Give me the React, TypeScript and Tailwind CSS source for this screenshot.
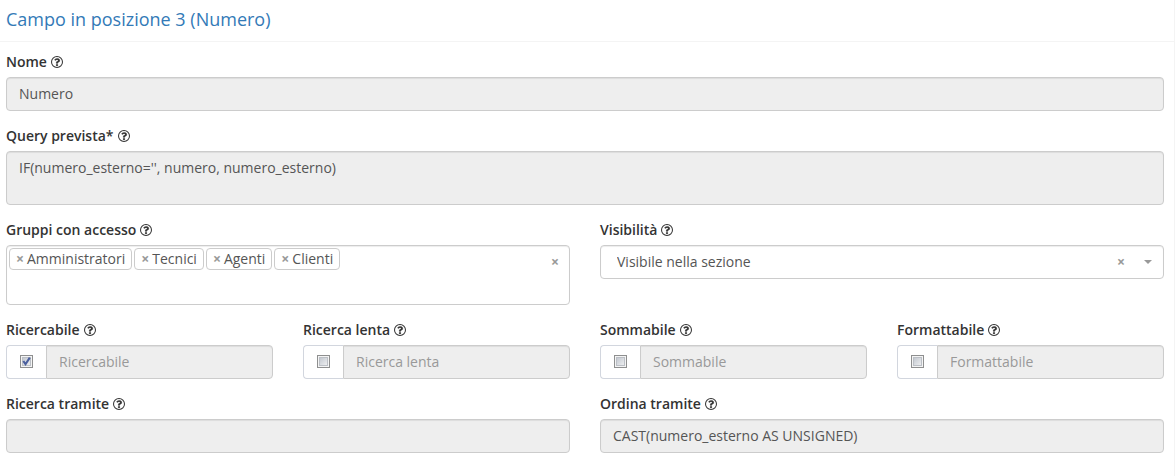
import { useState, type ReactNode } from "react";

const fieldClass =
  "block h-[34px] w-full min-w-0 border border-[#ccc] bg-[#eee] px-3 pb-0.5 text-sm text-[#555] shadow-[inset_0_1px_1px_rgba(0,0,0,0.075)] outline-none placeholder:text-[#999] placeholder:opacity-100";

function HelpIcon() {
  return (
    <svg viewBox="0 128 1536 1536" className="size-3 shrink-0" fill="currentColor" stroke="currentColor" aria-hidden="true">
      <circle cx="768" cy="896" r="702" fill="none" strokeWidth="132" />
      <path
        strokeWidth="20"
        d="M880 1200v160q0 14-9 23t-23 9h-160q-14 0-23-9t-9-23v-160q0-14 9-23t23-9h160q14 0 23 9t9 23zM1136 704q0 50-15 90t-45.5 69-52 44-59.5 36q-32 18-46.5 28t-26 24-11.5 29v32q0 14-9 23t-23 9h-160q-14 0-23-9t-9-23v-68q0-35 10.5-64.5t24-47.5 39-35.5 41-25.5 44.5-21q53-25 75-43t22-49q0-42-43.5-71.5t-95.5-29.5q-56 0-95 27-29 20-80 83-9 12-25 12-11 0-19-6l-108-82q-10-7-12-20t5-23q122-192 349-192 129 0 238.5 89.5t109.5 214.5z"
      />
    </svg>
  );
}

function Field({ id, label, children }: { id: string; label: string; children: ReactNode }) {
  return (
    <div className="min-w-0">
      <label htmlFor={id} className="mb-[5px] flex items-center gap-1 text-sm leading-5 font-semibold text-[#333]">
        {label}
        <HelpIcon />
      </label>
      {children}
    </div>
  );
}

function RemoveButton({ label, onClick }: { label: string; onClick: () => void }) {
  return (
    <button
      type="button"
      aria-label={label}
      onClick={onClick}
      className="pointer-events-auto w-2 shrink-0 text-center text-sm leading-5 font-bold text-[#999]"
    >
      ×
    </button>
  );
}

function CheckField({ id, label, initial = false }: { id: string; label: string; initial?: boolean }) {
  const [checked, setChecked] = useState(initial);
  return (
    <Field id={id} label={label}>
      <div className="flex">
        <span className="flex w-10 shrink-0 justify-center rounded-l border border-r-0 border-[#d2d6de] bg-white pt-[9px]">
          <span className="relative size-[13px]">
            <input
              id={id}
              type="checkbox"
              checked={checked}
              onChange={(e) => setChecked(e.target.checked)}
              className="block size-[13px] appearance-none border border-[#8e8f8f] bg-linear-to-br from-[#b9bfc8] to-[#f8f8f8] shadow-[inset_0_0_0_1px_#f4f4f4,inset_0_0_0_2px_#bcc0c6]"
            />
            {checked && (
              <svg viewBox="0 0 13 13" className="pointer-events-none absolute inset-0 size-[13px]" fill="none" aria-hidden="true">
                <path d="M3.3 6L5.5 9.2L9.8 2.6" stroke="#4a5f9e" strokeWidth="2.1" />
              </svg>
            )}
          </span>
        </span>
        <input type="text" disabled placeholder={label} aria-label={label} className={`${fieldClass} rounded-r`} />
      </div>
    </Field>
  );
}

export default function App() {
  const [groups, setGroups] = useState(["Amministratori", "Tecnici", "Agenti", "Clienti"]);
  const [visibility, setVisibility] = useState("section");

  return (
    <main className="min-h-screen border-r border-[#f4f4f4] bg-white font-['Open_Sans',sans-serif]">
      <header className="border-b border-[#f4f4f4] px-1.5 pt-[9px] pb-[11px]">
        <h1 className="text-lg leading-[21px] text-[#337ab7]">Campo in posizione 3 (Numero)</h1>
      </header>

      <form className="flex flex-col gap-[15px] py-2.5 pr-2.5 pl-1.5">
        <Field id="nome" label="Nome">
          <input id="nome" type="text" readOnly value="Numero" className={`${fieldClass} rounded`} />
        </Field>

        <Field id="query" label="Query prevista*">
          <textarea
            id="query"
            readOnly
            value="IF(numero_esterno='', numero, numero_esterno)"
            className="block h-[54px] w-full resize-none rounded border border-[#ccc] bg-[#eee] px-3 py-1.5 text-sm leading-5 text-[#555] shadow-[inset_0_1px_1px_rgba(0,0,0,0.075)] outline-none"
          />
        </Field>

        <div className="grid grid-cols-2 gap-[30px]">
          <Field id="gruppi" label="Gruppi con accesso">
            <div className="flex h-[60px] items-start rounded border border-[#ccc] bg-white p-0.5 shadow-[inset_0_1px_1px_rgba(0,0,0,0.075)]">
              <ul className="flex shrink-0 gap-0.5">
                {groups.map((group) => (
                  <li
                    key={group}
                    className="flex h-[22px] items-center gap-[3px] rounded border border-[#ccc] bg-white px-1.5 text-sm text-[#555]"
                  >
                    <RemoveButton label={`Rimuovi ${group}`} onClick={() => setGroups(groups.filter((g) => g !== group))} />
                    {group}
                  </li>
                ))}
              </ul>
              <input id="gruppi" type="text" className="h-[22px] min-w-0 flex-1 bg-transparent px-1 text-sm text-[#555] outline-none" />
              <div className="mt-1 mr-2 flex">
                <RemoveButton label="Rimuovi tutti" onClick={() => setGroups([])} />
              </div>
            </div>
          </Field>

          <Field id="visibilita" label="Visibilità">
            <div className="relative">
              <select
                id="visibilita"
                value={visibility}
                onChange={(e) => setVisibility(e.target.value)}
                className="block h-[34px] w-full appearance-none rounded border border-[#ccc] bg-white pr-14 pl-4 text-sm text-[#555] shadow-[inset_0_1px_1px_rgba(0,0,0,0.075)] outline-none"
              >
                <option value=""></option>
                <option value="section">Visibile nella sezione</option>
              </select>
              <div className="pointer-events-none absolute inset-y-0 right-3 flex items-center gap-[19px]">
                <RemoveButton label="Cancella" onClick={() => setVisibility("")} />
                <svg viewBox="0 0 8 4" className="h-1 w-2" fill="#999" aria-hidden="true">
                  <path d="M0 0h8L4 4z" />
                </svg>
              </div>
            </div>
          </Field>
        </div>

        <div className="grid grid-cols-4 gap-[30px]">
          <CheckField id="ricercabile" label="Ricercabile" initial />
          <CheckField id="lenta" label="Ricerca lenta" />
          <CheckField id="sommabile" label="Sommabile" />
          <CheckField id="formattabile" label="Formattabile" />
        </div>

        <div className="grid grid-cols-2 gap-[30px]">
          <Field id="ricerca-tramite" label="Ricerca tramite">
            <input id="ricerca-tramite" type="text" readOnly value="" className={`${fieldClass} rounded`} />
          </Field>
          <Field id="ordina-tramite" label="Ordina tramite">
            <input id="ordina-tramite" type="text" readOnly value="CAST(numero_esterno AS UNSIGNED)" className={`${fieldClass} rounded`} />
          </Field>
        </div>
      </form>
    </main>
  );
}
